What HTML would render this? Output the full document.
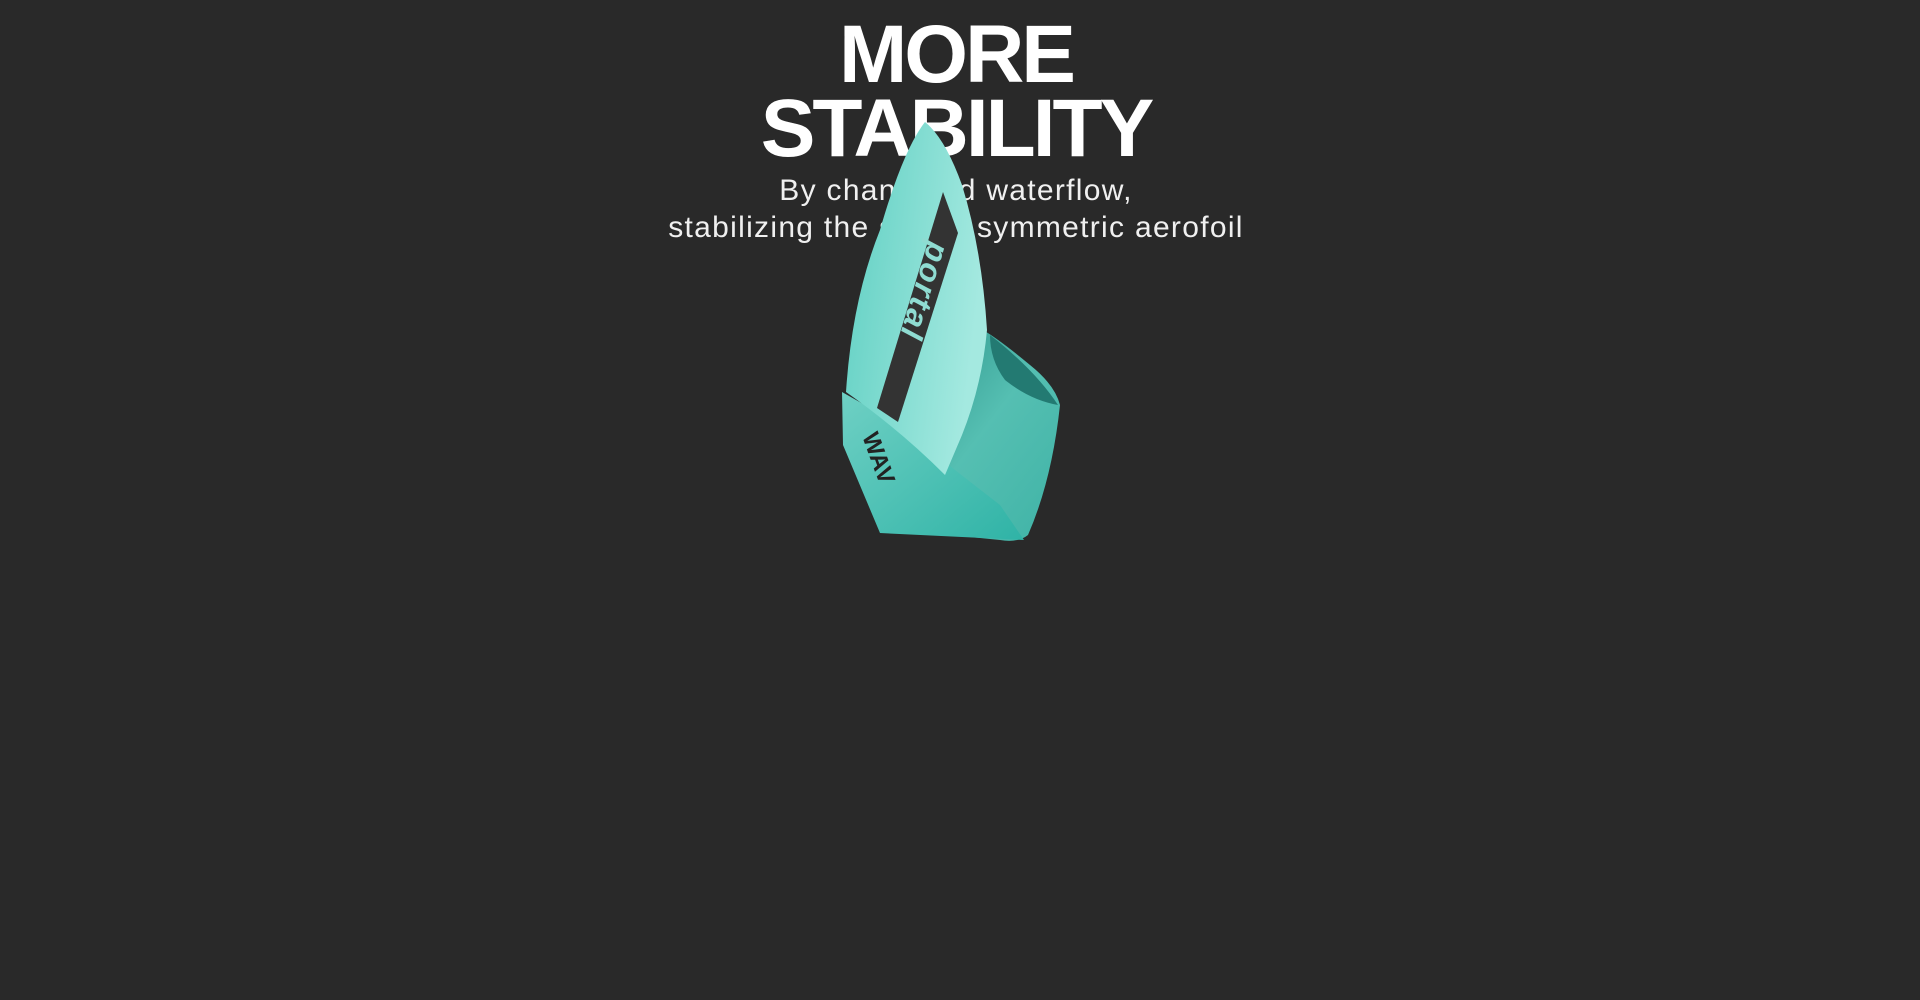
<!DOCTYPE html>
<html><head><meta charset="utf-8"><style>
html,body{margin:0;padding:0;background:#292929;width:1920px;height:1000px;overflow:hidden}
.t{position:absolute;left:0;width:1912px;text-align:center;color:#fff;font-family:"Liberation Sans",sans-serif;font-weight:700;font-size:82px;letter-spacing:-3px;line-height:74px;top:18px}
.s{position:absolute;left:0;width:1912px;text-align:center;color:#f0f0f0;font-family:"Liberation Sans",sans-serif;font-size:30px;letter-spacing:1.3px;line-height:37px;top:172px}
svg{position:absolute;left:0;top:0}
</style></head><body>
<div class="t">MORE<br>STABILITY</div>
<div class="s">By channeled waterflow,<br>stabilizing the strut's symmetric aerofoil</div>
<svg width="1920" height="1000" viewBox="0 0 1920 1000">
<defs>
<linearGradient id="g1" x1="0" y1="0" x2="1" y2="0.3"><stop offset="0" stop-color="#5fcfc2"/><stop offset="1" stop-color="#a4e9e0"/></linearGradient>
<linearGradient id="g2" x1="0" y1="0" x2="1" y2="1"><stop offset="0" stop-color="#2a8f86"/><stop offset="0.5" stop-color="#55bfb2"/><stop offset="1" stop-color="#3fb3a6"/></linearGradient>
<linearGradient id="g3" x1="0" y1="0" x2="1" y2="1"><stop offset="0" stop-color="#6fd0c4"/><stop offset="1" stop-color="#2fb3a6"/></linearGradient>
</defs>
<path d="M983,330 Q1000,340 1030,365 Q1055,385 1060,405 Q1052,480 1028,535 Q1018,543 1000,540 L900,530 L940,470 Z" fill="url(#g2)"/>
<path d="M990,335 Q1035,370 1058,405 Q1030,400 1005,380 Q990,360 990,335 Z" fill="#237a72"/>
<path d="M880,533 L843,445 L842,392 L900,425 L955,470 L1000,505 L1024,540 Z" fill="url(#g3)"/>
<path d="M925,122 Q945,138 962,185 Q982,250 987,330 Q982,385 962,435 L945,475 Q900,430 846,392 Q852,300 880,230 Q903,150 925,122 Z" fill="url(#g1)"/>
<path d="M943,192 L958,233 L898,422 L877,408 Z" fill="#333"/>
<text x="0" y="0" transform="translate(929,240) rotate(107)" fill="#8fdcd2" font-family="Liberation Sans,sans-serif" font-weight="700" font-style="italic" font-size="32" letter-spacing="2">portal</text>
<text x="0" y="0" transform="translate(862,436) rotate(70)" fill="#222" font-family="Liberation Sans,sans-serif" font-weight="700" font-size="24">WAV</text>
</svg>
</body></html>
